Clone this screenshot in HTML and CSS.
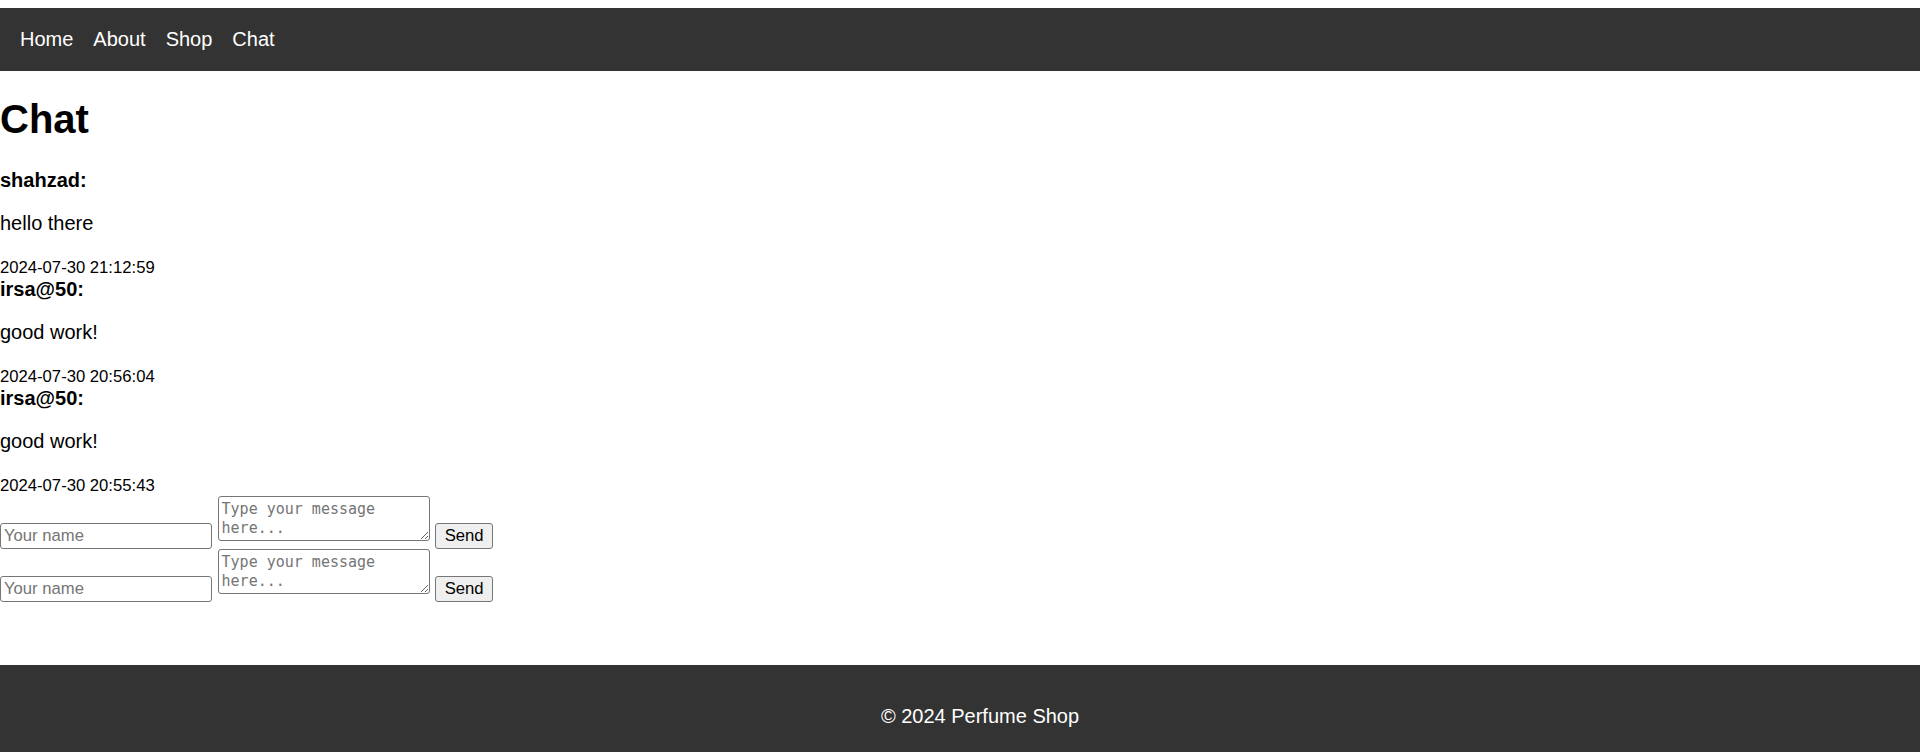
FILE: index.html
```html
<!DOCTYPE html>
<html lang="en">
<head>
<meta charset="utf-8">
<title>Chat - Perfume Shop</title>
<link rel="stylesheet" href="styles.css">
</head>
<body>
<header class="site-header">
  <nav class="nav">
    <a class="nav-link" href="#">Home</a>
    <a class="nav-link" href="#">About</a>
    <a class="nav-link" href="#">Shop</a>
    <a class="nav-link" href="#">Chat</a>
  </nav>
</header>
<main class="chat">
  <h1 class="chat-title">Chat</h1>
  <div class="messages">
    <div class="message">
      <strong class="author">shahzad:</strong>
      <p class="text">hello there</p>
      <small class="time">2024-07-30 21:12:59</small>
    </div>
    <div class="message">
      <strong class="author">irsa@50:</strong>
      <p class="text">good work!</p>
      <small class="time">2024-07-30 20:56:04</small>
    </div>
    <div class="message">
      <strong class="author">irsa@50:</strong>
      <p class="text">good work!</p>
      <small class="time">2024-07-30 20:55:43</small>
    </div>
  </div>
  <form class="chat-form">
    <input class="name-input" type="text" placeholder="Your name">
    <textarea class="msg-input" placeholder="Type your message here..."></textarea>
    <button class="send-btn" type="button">Send</button>
  </form>
  <form class="chat-form">
    <input class="name-input" type="text" placeholder="Your name">
    <textarea class="msg-input" placeholder="Type your message here..."></textarea>
    <button class="send-btn" type="button">Send</button>
  </form>
</main>
<footer class="site-footer">
  <p class="footer-text">© 2024 Perfume Shop</p>
</footer>
</body>
</html>
```
FILE: styles.css
```css
html, body {
  margin: 0;
  padding: 0;
}
body {
  padding-top: 8px;
  font-family: "Liberation Sans", Arial, sans-serif;
  font-size: 20px;
  color: #000;
  background: #fff;
}
.site-header {
  background: #333;
  padding: 20px;
}
.nav {
  display: flex;
  gap: 20px;
}
.nav-link {
  color: #fff;
  text-decoration: none;
  font-size: 20px;
}
.chat {
  padding-bottom: 63px;
}
.chat-title {
  font-size: 40px;
  font-weight: bold;
  margin: 26px 0 27px;
}
.author {
  font-weight: bold;
}
.text {
  margin: 20px 0;
}
.time {
  font-size: 16.67px;
}
.chat-form {
  margin: 0;
}
.name-input {
  box-sizing: border-box;
  width: 212px;
  height: 26px;
  margin: 0;
  padding: 0 3px;
  border: 1px solid #767676;
  border-radius: 3px;
  font-family: "Liberation Sans", Arial, sans-serif;
  font-size: 16.67px;
  color: #000;
  background: #fff;
}
.name-input::placeholder {
  color: #757575;
}
.msg-input {
  box-sizing: border-box;
  width: 212px;
  height: 45px;
  margin: 0;
  padding: 3px 3px 2px;
  border: 1px solid #767676;
  border-radius: 3px;
  font-family: "DejaVu Sans Mono", "Liberation Mono", monospace;
  font-size: 15px;
  line-height: 19px;
  color: #000;
  background: #fff;
}
.msg-input::placeholder {
  color: #757575;
}
.send-btn {
  box-sizing: border-box;
  height: 26px;
  margin: 0;
  padding: 0 8.5px;
  border: 1px solid #767676;
  border-radius: 3px;
  background: #efefef;
  color: #000;
  font-family: "Liberation Sans", Arial, sans-serif;
  font-size: 16.67px;
}
.site-footer {
  background: #333;
  color: #fff;
  text-align: center;
  padding: 20px 0 9px 40px;
}
.footer-text {
  margin: 20px 0;
}
```
